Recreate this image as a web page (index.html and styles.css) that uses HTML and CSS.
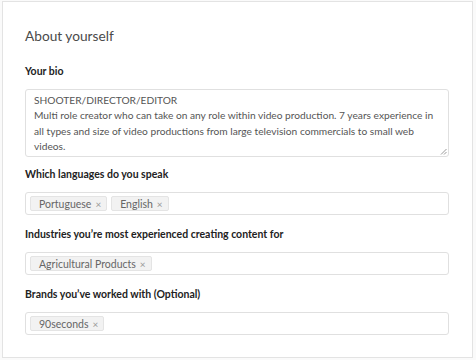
FILE: index.html
```html
<!DOCTYPE html>
<html lang="en">

<head>
    <meta charset="UTF-8">
    <meta name="viewport" content="width=device-width, initial-scale=1.0">
    <title>About yourself</title>
    <link rel="stylesheet" href="styles.css">
</head>

<body>
    <div class="card">
        <h3 class="card-title">About yourself</h3>

        <div class="field field-bio">
            <label class="field-label">Your bio</label>
            <div class="bio-box">
                <p>SHOOTER/DIRECTOR/EDITOR</p>
                <p>Multi role creator who can take on any role within video production. 7 years experience in all types and size of video productions from large television commercials to small web videos.</p>
                <svg class="grip" width="7" height="7" viewBox="0 0 7 7">
                    <path d="M6.5 1 L1 6.5 M6.5 4 L4 6.5" stroke="#999" stroke-width="1" fill="none" />
                </svg>
            </div>
        </div>

        <div class="field">
            <label class="field-label">Which languages do you speak</label>
            <div class="tag-input">
                <span class="tag">Portuguese <span class="tag-x">×</span></span>
                <span class="tag">English <span class="tag-x">×</span></span>
            </div>
        </div>

        <div class="field">
            <label class="field-label">Industries you’re most experienced creating content for</label>
            <div class="tag-input">
                <span class="tag">Agricultural Products <span class="tag-x">×</span></span>
            </div>
        </div>

        <div class="field">
            <label class="field-label">Brands you’ve worked with (Optional)</label>
            <div class="tag-input">
                <span class="tag">90seconds <span class="tag-x">×</span></span>
            </div>
        </div>
    </div>
</body>

</html>
```

FILE: styles.css
```css
body {
    margin: 0;
    font-family: Lato, "Open Sans", sans-serif;
    background: #fafafa;
}

.card {
    box-sizing: border-box;
    width: 471px;
    height: 357px;
    margin: 1px 0 0 2px;
    padding: 24px 23px 0 22px;
    background: #fff;
    border: 1px solid #e3e3e3;
}

.card-title {
    margin: 0 0 18px;
    font-size: 13.7px;
    line-height: 20px;
    font-weight: 400;
    color: #4a4a4a;
}

.field {
    margin-bottom: 12px;
}

.field-bio {
    margin-bottom: 10px;
}

.field-label {
    display: block;
    margin-bottom: 11px;
    font-size: 10.5px;
    line-height: 14px;
    font-weight: 700;
    color: #222;
}

.bio-box {
    position: relative;
    box-sizing: border-box;
    height: 68px;
    padding: 3px 14px 3px 8px;
    border: 1px solid #e0e0e0;
    border-radius: 3px;
    font-size: 10.2px;
    line-height: 15.3px;
    color: #555;
}

.bio-box p {
    margin: 0;
}

.grip {
    position: absolute;
    right: 1px;
    bottom: 1px;
}

.tag-input {
    box-sizing: border-box;
    height: 23px;
    padding: 3px 4px;
    display: flex;
    gap: 4px;
    border: 1px solid #e0e0e0;
    border-radius: 3px;
}

.tag {
    display: flex;
    align-items: center;
    gap: 4px;
    padding: 0 5px 0 8px;
    background: #f2f2f2;
    border: 1px solid #e4e4e4;
    border-radius: 2px;
    font-size: 10.5px;
    color: #666;
}

.tag-x {
    font-size: 10px;
    color: #999;
}
```
